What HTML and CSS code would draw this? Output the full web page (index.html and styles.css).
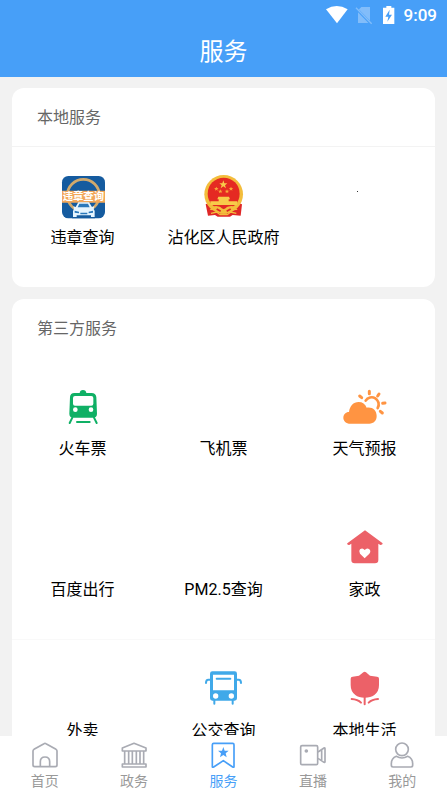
FILE: index.html
```html
<!DOCTYPE html>
<html lang="zh-CN">
<head>
<meta charset="utf-8">
<meta name="viewport" content="width=device-width, initial-scale=1">
<title>服务</title>
<link rel="stylesheet" href="styles.css">
</head>
<body>
<header class="top">
  <div class="status">
    <svg class="status-icons" viewBox="75 15 210 60" aria-hidden="true">
      <path d="M75 28Q107 8 140 28L108 70Z" fill="#fff"/>
      <path d="M181 21h26v48h-36V31Z" fill="#82bdfa"/>
      <path d="M165 25l46 47" stroke="#479ff8" stroke-width="8"/>
      <path d="M165 23l47 48" stroke="#82bdfa" stroke-width="4"/>
      <path d="M256 18h15v5h9v49h-34V23h10Z" fill="#fff"/>
      <path d="M266 29l-13 21h9l-3 15 14-21h-9Z" fill="#479ff8"/>
    </svg>
    <time class="clock">9:09</time>
  </div>
  <h1 class="title">服务</h1>
</header>

<main class="content">
  <section class="card">
    <h2 class="card-title">本地服务</h2>
    <div class="grid">
      <a class="cell" href="#">
        <svg class="icon" viewBox="32 30 132 132" aria-hidden="true">
          <rect x="35" y="33" width="129" height="127" rx="19" fill="#155b9f"/>
          <circle cx="99" cy="91" r="48" fill="none" stroke="#d1a96c" stroke-width="8"/>
          <path d="M35 77h129v36H35Z" fill="#f2a75a"/>
          <path d="M65 160l12-44h44l13 44Z" fill="#155b9f"/>
          <path d="M84 112h32l9 14 7-2-2 8 3 6v18h-11v-5H79v5H68v-18l3-6-2-8 7 2Z" fill="#e6f5ff"/>
          <path d="M87 116h26l5 11H82ZM73 137l13 3v5l-13-2ZM128 137l-13 3v5l13-2ZM90 143h21v5H90Z" fill="#2a78ba"/>
          <text class="icon-text" x="99" y="106" text-anchor="middle">违章查询</text>
        </svg>
        <span class="label">违章查询</span>
      </a>
      <a class="cell" href="#">
        <svg class="icon" viewBox="35 30 132 132" aria-hidden="true">
          <path d="M46 118l12-5h84l13 5-4 34-24-2-8 5H82l-8-5-21 2Z" fill="#df2727"/>
          <circle cx="100" cy="88" r="58" fill="#f3bd3c"/>
          <circle cx="100" cy="86" r="48" fill="#e52a22"/>
          <path d="M99 46l3 9h9l-7 6 3 9-8-6-8 6 3-9-7-6h9Z" fill="#f8cb4a"/>
          <path d="M78 65l2 4 5 0-4 3 1 5-4-3-4 3 1-5-4-3 5 0ZM122 65l2 4 5 0-4 3 1 5-4-3-4 3 1-5-4-3 5 0ZM90 73l2 4 5 0-4 3 1 5-4-3-4 3 1-5-4-3 5 0ZM110 73l2 4 5 0-4 3 1 5-4-3-4 3 1-5-4-3 5 0Z" fill="#f8a73a"/>
          <path d="M84 95h32l3 8h-4v6h25v11H60v-11h25v-6h-4Z" fill="#f8cb4a"/>
          <path d="M66 126q16-8 34 7 18-15 34-7l8 9-22 1-10 10H90l-10-10-22-1Z" fill="#f3bd3c"/>
          <path d="M79 132l12 7M121 132l-12 7M94 127h12" stroke="#df2727" stroke-width="5"/>
          <path d="M62 145l17-4 10 8h22l10-8 17 4" fill="none" stroke="#f3bd3c" stroke-width="4"/>
        </svg>
        <span class="label">沾化区人民政府</span>
      </a>
      <div class="cell">
        <svg class="icon" viewBox="0 0 44 44" aria-hidden="true"><rect x="14" y="16" width="1" height="1" fill="#333"/></svg>
      </div>
    </div>
  </section>

  <section class="card">
    <h2 class="card-title plain">第三方服务</h2>
    <div class="grid">
      <a class="cell" href="#">
        <svg class="icon" viewBox="32 18 132 132" aria-hidden="true">
          <path fill-rule="evenodd" d="M72 39h16q1-9 10-9t10 9h16q12 0 14 12l2 50q0 12-12 12H69q-12 0-12-12l2-50q1-12 13-12ZM74 48q-6 0-6 6v17q0 6 6 6h49q6 0 6-6V54q0-6-6-6ZM75 82a7 7 0 1 0 0 14a7 7 0 1 0 0-14ZM122 82a7 7 0 1 0 0 14a7 7 0 1 0 0-14Z" fill="#0fb065"/>
          <path d="M66 113l-8 16M131 113l8 16M80 126h38" fill="none" stroke="#0fb065" stroke-width="6" stroke-linecap="round"/>
        </svg>
        <span class="label">火车票</span>
      </a>
      <a class="cell" href="#">
        <span class="icon"></span>
        <span class="label">飞机票</span>
      </a>
      <a class="cell" href="#">
        <svg class="icon" viewBox="38 18 132 132" aria-hidden="true">
          <path d="M106 62a21 21 0 1 1 36 22" fill="none" stroke="#ff9442" stroke-width="8" stroke-linecap="round"/>
          <path d="M117 34v7M146 42l-4 6M88 48l6 5M157 70l7-1M150 94l6 5" stroke="#ff9442" stroke-width="9" stroke-linecap="round"/>
          <path d="M60 131c-13 0-21-8-21-18 0-9 7-17 17-17 2-18 13-30 29-30 11 0 20 6 24 17 17-3 30 8 30 25 0 14-9 23-22 23Z" fill="#ff9442"/>
        </svg>
        <span class="label">天气预报</span>
      </a>
      <a class="cell" href="#">
        <span class="icon"></span>
        <span class="label">百度出行</span>
      </a>
      <a class="cell" href="#">
        <span class="icon"></span>
        <span class="label">PM2.5查询</span>
      </a>
      <a class="cell" href="#">
        <svg class="icon" viewBox="38 21 132 132" aria-hidden="true">
          <path d="M104 31l52 38q2 2 0 4t-6 2l-6-4v49q0 10-10 10H73q-10 0-10-10V71l-6 4q-4 1-6-2t1-4Z" fill="#ec6168"/>
          <path d="M103 115L89 101q-5-7 0-13 8-6 14 2 7-8 14-2 6 6 0 13Z" fill="#fff"/>
        </svg>
        <span class="label">家政</span>
      </a>
      <a class="cell ruled" href="#">
        <span class="icon"></span>
        <span class="label">外卖</span>
      </a>
      <a class="cell ruled" href="#">
        <svg class="icon" viewBox="35 24 132 132" aria-hidden="true">
          <path fill-rule="evenodd" d="M66 34h67q7 0 7 7v74q0 7-7 7H66q-7 0-7-7V41q0-7 7-7ZM68 44v47h63V44ZM76 100a8 8 0 1 0 0 16a8 8 0 1 0 0-16ZM123 100a8 8 0 1 0 0 16a8 8 0 1 0 0-16Z" fill="#40a9e9"/>
          <path d="M79 56h41" stroke="#40a9e9" stroke-width="6" stroke-linecap="round"/>
          <path d="M59 59h-5q-7 0-7 10M140 59h5q7 0 7 10M72 121v10M127 121v10" fill="none" stroke="#40a9e9" stroke-width="6" stroke-linecap="round"/>
        </svg>
        <span class="label">公交查询</span>
      </a>
      <a class="cell ruled" href="#">
        <svg class="icon" viewBox="38 24 132 132" aria-hidden="true">
          <path d="M86 47l13-10q4-3 8 0l12 10 21 3q6 0 6 6v19q0 20-14 30-11 8-29 8t-28-8q-14-10-14-30V56q0-6 6-6Z" fill="#ec6168"/>
          <path d="M103 109v24M64 117q18 1 28 11M143 117q-18 1-28 11" fill="none" stroke="#ec6168" stroke-width="6" stroke-linecap="round"/>
        </svg>
        <span class="label">本地生活</span>
      </a>
    </div>
  </section>
</main>

<nav class="tabs">
  <a class="tab" href="#">
    <svg class="tab-icon" viewBox="92 78 84 84" aria-hidden="true">
      <path d="M98 108q0-3 3-5l30-17q3-2 6 0l30 17q3 2 3 5v42q0 5-5 5h-62q-5 0-5-5ZM120 155v-15q0-14 14-14t14 14v15"/>
    </svg>
    <span>首页</span>
  </a>
  <a class="tab" href="#">
    <svg class="tab-icon" viewBox="360 78 84 84" aria-hidden="true">
      <path d="M367 99l35-14 36 14v9h-71ZM367 147h71v9h-71ZM374 109v37M386 109v37M397 109v37M409 109v37M420 109v37M431 109v37"/>
    </svg>
    <span>政务</span>
  </a>
  <a class="tab active" href="#" aria-current="page">
    <svg class="tab-icon" viewBox="628 78 84 84" aria-hidden="true">
      <path d="M638 89q0-4 4-4h57q4 0 4 4v66q0 3-4 1l-28-19-29 19q-4 2-4-1Z"/>
      <path class="solid" d="M671 96l4 11h12l-9 8 3 12-10-7-10 7 3-12-9-8h12Z"/>
    </svg>
    <span>服务</span>
  </a>
  <a class="tab" href="#">
    <svg class="tab-icon" viewBox="297 78 84 84" aria-hidden="true">
      <rect x="302" y="92" width="51" height="57" rx="4"/>
      <path d="M354 111l18-12q3-1 3 2v39q0 3-3 2l-18-12M365 106v29"/>
      <circle class="solid" cx="319" cy="108" r="3"/>
    </svg>
    <span>直播</span>
  </a>
  <a class="tab" href="#">
    <svg class="tab-icon" viewBox="565 78 84 84" aria-hidden="true">
      <circle cx="607" cy="103" r="19"/>
      <path d="M590 124q-15 6-15 22v5q0 5 5 5h54q5 0 5-5v-5q0-16-15-22-17 10-34 0Z"/>
    </svg>
    <span>我的</span>
  </a>
</nav>
</body>
</html>
```
FILE: styles.css
```css
* {
  box-sizing: border-box;
}

body {
  margin: 0;
  height: 100vh;
  display: flex;
  flex-direction: column;
  background: #f2f2f2;
  color: #000;
  font-family: Roboto, "Noto Sans CJK SC", sans-serif;
  font-size: 16px;
}

a {
  color: inherit;
  text-decoration: none;
}

svg {
  display: block;
}

.top {
  flex: none;
  background: #479ff8;
  color: #fff;
}

.status {
  display: flex;
  justify-content: flex-end;
  align-items: center;
  gap: 8px;
  height: 30px;
  padding-right: 10px;
}

.status-icons {
  width: 70px;
  height: 20px;
}

.clock {
  font-size: 17px;
  font-weight: 500;
  line-height: 30px;
}

.title {
  margin: 0;
  height: 47px;
  font-size: 24px;
  font-weight: 400;
  line-height: 44px;
  text-align: center;
}

.content {
  flex: 1;
  min-height: 0;
  overflow: hidden;
  display: flex;
  flex-direction: column;
  gap: 12px;
  padding: 11px 12px 0;
}

.card {
  flex: none;
  border-radius: 12px;
  background: #fff;
}

.card-title {
  margin: 0;
  height: 59px;
  padding: 0 25px;
  border-bottom: 1px solid #f3f3f3;
  color: #666;
  font-size: 16px;
  font-weight: 400;
  line-height: 60px;
}

.card-title.plain {
  border-color: transparent;
}

.grid {
  display: grid;
  grid-template-columns: repeat(3, 1fr);
  row-gap: 1px;
}

.cell {
  display: flex;
  flex-direction: column;
  align-items: center;
  gap: 7px;
  height: 140px;
  padding-top: 28px;
}

.ruled {
  box-shadow: 0 -1px #f9f9f9;
}

.icon {
  width: 44px;
  height: 44px;
}

.icon-text {
  fill: #fff;
  font-size: 31px;
  font-weight: 700;
}

.label {
  line-height: 24px;
  white-space: nowrap;
}

.tabs {
  flex: none;
  display: grid;
  grid-template-columns: repeat(5, 1fr);
  height: 58px;
  background: #fff;
}

.tab {
  display: flex;
  flex-direction: column;
  align-items: center;
  gap: 2px;
  padding-top: 5px;
  color: #999;
  font-size: 14px;
  line-height: 20px;
}

.tab-icon {
  width: 28px;
  height: 28px;
  fill: none;
  stroke: #a9abb3;
  stroke-width: 5;
  stroke-linejoin: round;
}

.tab-icon .solid {
  fill: #a9abb3;
}

.active {
  color: #479ff8;
}

.active .tab-icon {
  stroke: #479ff8;
}

.active .tab-icon .solid {
  fill: #479ff8;
  stroke: none;
}
```
